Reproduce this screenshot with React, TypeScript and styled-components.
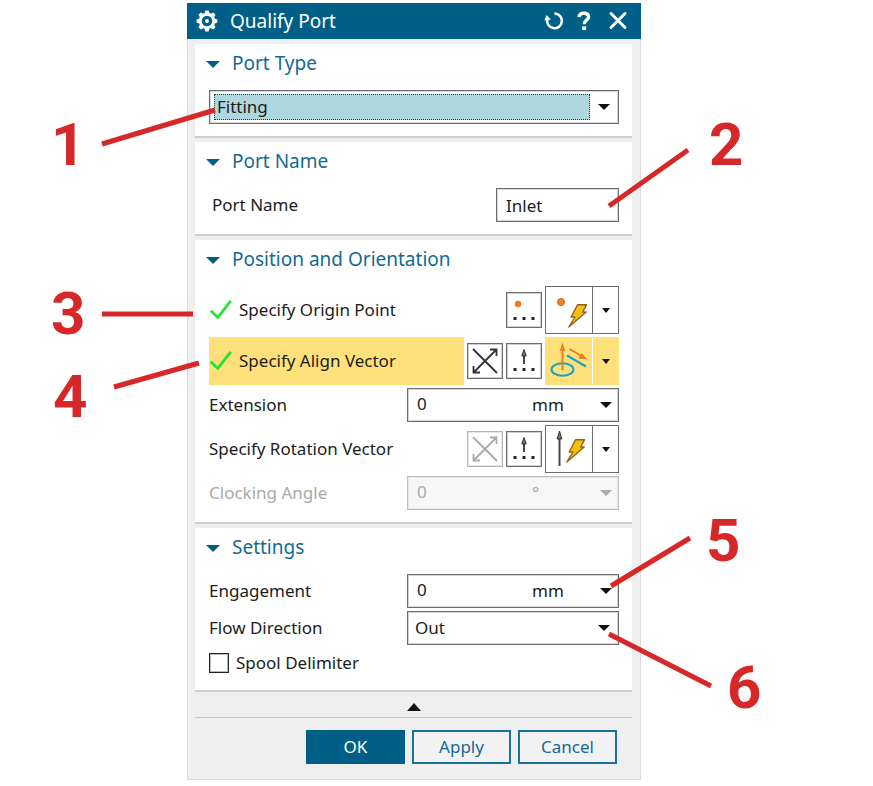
import React, { useState } from "react";
import styled, { createGlobalStyle, css } from "styled-components";

const brand = "#005f87";
const ink = "#1c1c1c";
const line = "#6e6e6e";
const yellow = "#ffe07a";
const red = "#d62828";

const GlobalStyle = createGlobalStyle`
  *, *::before, *::after { box-sizing: border-box; }
  body { margin: 0; background: #fff; }
  body, button, input, select {
    font-family: "Noto Sans", "Open Sans", sans-serif;
    font-size: 17px;
    line-height: 24px;
    color: ${ink};
  }
`;

const Page = styled.main`
  display: grid;
  grid-template-columns: 187fr minmax(440px, 454fr) 232fr;
  min-height: 100vh;
  align-items: start;
  overflow: hidden;
`;

const Figure = styled.div`
  grid-column: 2;
  position: relative;
  padding: 3px 0 6px;
`;

const Dialog = styled.section`
  background: #efefef;
  border: solid #dcdcdc;
  border-width: 0 1px 1px;
`;

const TitleBar = styled.header`
  display: flex;
  align-items: center;
  height: 36px;
  margin: 0 -1px;
  padding: 0 11px 0 9px;
  background: ${brand};
  color: #fff;
`;

const Title = styled.h1`
  flex: 1;
  margin: 0 0 0 12px;
  font-size: 19px;
  line-height: 36px;
  font-weight: 400;
`;

const TitleActions = styled.div`
  display: flex;
  gap: 8px;
`;

const TitleButton = styled.button`
  display: grid;
  place-items: center;
  width: 24px;
  height: 24px;
  padding: 0;
  border: 0;
  background: none;
  color: inherit;
`;

const Sections = styled.div`
  display: grid;
  gap: 4px;
  padding: 5px 8px 0 7px;
`;

const Panel = styled.section`
  padding: 0 13px 12px 14px;
  background: #fff;
  border-bottom: 2px solid #cfcfcf;
`;

const PanelHeading = styled.h2`
  margin: 0 0 8px -3px;
  font-size: 19px;
  line-height: 38px;
  font-weight: 400;
`;

const PanelToggle = styled.button`
  display: flex;
  align-items: center;
  gap: 12px;
  height: 38px;
  padding: 0;
  border: 0;
  background: none;
  font-size: inherit;
  color: #126a94;

  svg {
    margin-top: 2px;
  }
`;

const Rows = styled.div`
  display: grid;
  gap: 3px;
`;

const FieldRow = styled.div<{ $indent?: boolean; $muted?: boolean }>`
  display: grid;
  grid-template-columns: 198fr 212fr;
  align-items: center;
  padding-left: ${(p) => (p.$indent ? "3px" : "0")};
  color: ${(p) => (p.$muted ? "#a9a9a9" : ink)};
`;

const TextInput = styled.input`
  justify-self: end;
  width: 123px;
  height: 34px;
  padding: 0 9px;
  border: 1px solid ${line};
  box-shadow: inset 0 0 0 1px #d4d4d4;
  background: #fff;
`;

const Box = styled.div<{ $muted?: boolean }>`
  display: grid;
  align-items: center;
  height: 34px;
  border: 1px solid ${(p) => (p.$muted ? "#bdbdbd" : line)};
  background: ${(p) => (p.$muted ? "#f6f6f6" : "#fff")};
  box-shadow: inset 0 0 0 1px ${(p) => (p.$muted ? "#e6e6e6" : "#d4d4d4")};
  color: ${(p) => (p.$muted ? "#a9a9a9" : ink)};
`;

const ComboBox = styled(Box)`
  grid-template-columns: 1fr 28px;
`;

const UnitBox = styled(Box)`
  grid-template-columns: 1fr 61px 25px;
`;

const bare = css`
  appearance: none;
  min-width: 0;
  width: 100%;
  height: 32px;
  margin: 0;
  border: 0;
  border-radius: 0;
  background: none;
  color: inherit;
  opacity: 1;
`;

const BareSelect = styled.select<{ $pad?: number }>`
  ${bare}
  grid-row: 1;
  grid-column: 1 / -1;
  padding: 0 0 0 ${(p) => p.$pad ?? 7}px;
`;

const UnitSelect = styled(BareSelect)`
  grid-column: 2 / -1;
`;

const FocusedSelect = styled.select`
  ${bare}
  grid-row: 1;
  grid-column: 1;
  width: auto;
  height: 26px;
  margin-left: 4px;
  padding: 0 2px;
  border: 1px dotted #3e3232;
  line-height: 22px;
  background: #aed7e0;
`;

const ValueInput = styled.input`
  ${bare}
  grid-row: 1;
  grid-column: 1;
  padding: 0 0 3px 9px;
`;

const ArrowCell = styled.span`
  grid-row: 1;
  grid-column: -2;
  display: grid;
  place-items: center;
  pointer-events: none;
`;

const PickRow = styled.div`
  display: flex;
  align-items: center;
  gap: 3px;
  height: 48px;
`;

const PickLabel = styled.div<{ $active?: boolean }>`
  flex: 1;
  display: flex;
  align-items: center;
  gap: 7px;
  height: 48px;
  background: ${(p) => (p.$active ? yellow : "none")};
`;

const ToolButton = styled.button`
  display: grid;
  place-items: center;
  width: 36px;
  height: 36px;
  padding: 0;
  border: 1px solid ${line};
  box-shadow: inset 0 0 0 1px #cfcfcf;
  background: #fff;
  color: #333;
  &:disabled {
    border-color: #b5b5b5;
    box-shadow: inset 0 0 0 1px #e6e6e6;
    color: #aaa;
  }
`;

const Split = styled.div<{ $active?: boolean }>`
  display: grid;
  grid-template-columns: 46px 25px;
  gap: 1px;
  height: 48px;
  border: 1px solid ${(p) => (p.$active ? yellow : line)};
  background: ${(p) => (p.$active ? "#fff" : line)};
`;

const SplitButton = styled.button<{ $active?: boolean }>`
  display: grid;
  place-items: center;
  padding: 0;
  border: 0;
  background: ${(p) => (p.$active ? yellow : "#fff")};
`;

const CheckRow = styled.label`
  display: flex;
  align-items: center;
  gap: 7px;
  height: 30px;
`;

const CheckBox = styled.input`
  appearance: none;
  width: 20px;
  height: 20px;
  margin: 0;
  border: 1px solid #222;
  box-shadow: inset 0 0 0 1px #bbb;
  background: #fff;
  &:checked {
    background: ${brand};
  }
`;

const Collapse = styled.button`
  display: grid;
  place-items: center;
  height: 26px;
  margin: -4px 0 0;
  padding: 4px 0 0;
  border: 0;
  border-bottom: 1px solid #c6c6c6;
  background: none;
`;

const Footer = styled.footer`
  display: flex;
  justify-content: flex-end;
  gap: 7px;
  padding: 12px 23px 15px;
`;

const ActionButton = styled.button<{ $primary?: boolean }>`
  width: 99px;
  height: 34px;
  padding: 0;
  border: 2px solid ${(p) => (p.$primary ? brand : "#1b7299")};
  background: ${(p) => (p.$primary ? brand : "#f2f2f2")};
  color: ${(p) => (p.$primary ? "#fff" : "#126a94")};
`;

const CalloutLayer = styled.div<{ $side: "left" | "right" }>`
  position: absolute;
  top: 0;
  ${(p) => (p.$side === "left" ? "left: -187px;" : "left: calc(100% - 41px);")}
  width: 273px;
  height: 786px;
  pointer-events: none;
`;

const CalloutNumber = styled.span<{ $x: number; $y: number }>`
  position: absolute;
  left: ${(p) => p.$x}px;
  top: ${(p) => p.$y}px;
  font-family: Roboto, sans-serif;
  font-weight: 700;
  font-size: 60px;
  line-height: 44px;
  color: ${red};
`;

type Callout = { n: number; x: number; y: number; from: [number, number]; to: [number, number] };

const leftCallouts: Callout[] = [
  { n: 1, x: 51, y: 123, from: [102, 144], to: [215, 110] },
  { n: 3, x: 51, y: 292, from: [102, 314], to: [193, 314] },
  { n: 4, x: 53, y: 375, from: [114, 387], to: [199, 363] },
];

const rightCallouts: Callout[] = [
  { n: 2, x: 109, y: 123, from: [9, 206], to: [88, 150] },
  { n: 5, x: 106, y: 519, from: [11, 586], to: [90, 538] },
  { n: 6, x: 127, y: 666, from: [9, 634], to: [111, 686] },
];

function Callouts({ side, items }: { side: "left" | "right"; items: Callout[] }) {
  return (
    <CalloutLayer $side={side}>
      <svg width="273" height="786" stroke={red} strokeWidth="5" aria-hidden="true">
        {items.map((c) => (
          <line key={c.n} x1={c.from[0]} y1={c.from[1]} x2={c.to[0]} y2={c.to[1]} />
        ))}
      </svg>
      {items.map((c) => (
        <CalloutNumber key={c.n} $x={c.x} $y={c.y}>
          {c.n}
        </CalloutNumber>
      ))}
    </CalloutLayer>
  );
}

const Arrow = ({ w = 12, h = 6, up = false, color = "#111" }) => (
  <svg width={w} height={h} viewBox="0 0 12 6" preserveAspectRatio="none" fill={color} aria-hidden="true">
    <path d={up ? "M0 6 6 0l6 6z" : "M0 0h12L6 6z"} />
  </svg>
);

const Gear = () => (
  <svg width="22" height="22" viewBox="-11 -11 22 22" fill="none" stroke="#fff" aria-hidden="true">
    <circle r="6.800" strokeWidth="3" />
    <circle r="1.900" fill="#fff" stroke="none" />
    {[0, 45, 90, 135, 180, 225, 270, 315].map((a) => (
      <path key={a} d="M-2.500-7.500-1.600-10.400H1.600L2.500-7.500z" fill="#fff" stroke="none" transform={`rotate(${a})`} />
    ))}
  </svg>
);

const Reset = () => (
  <svg width="22" height="22" viewBox="0 0 22 22" fill="none" stroke="#fff" strokeWidth="2.500" aria-hidden="true">
    <path d="M11.500 3.400A7.400 7.400 0 1 1 4.300 9" />
    <path d="M1.400 10.600 3.400 5 8 9.400z" fill="#fff" stroke="none" />
  </svg>
);

const Help = () => (
  <svg width="22" height="22" viewBox="0 0 22 22" fill="none" stroke="#fff" aria-hidden="true">
    <path d="M4 7.200C4.200 4.200 6 3.200 8.800 3.200c3 0 4.800 1.400 4.800 3.800 0 3.400-4.400 3-4.400 7.200" strokeWidth="3.400" />
    <path d="M7.200 16.400h4v3.600h-4z" fill="#fff" stroke="none" />
  </svg>
);

const Close = () => (
  <svg width="22" height="22" viewBox="0 0 22 22" stroke="#fff" strokeWidth="3" strokeLinecap="round" aria-hidden="true">
    <path d="M4 3.500l14 14M18 3.500 4 17.500" />
  </svg>
);

const Tick = () => (
  <svg width="23" height="22" viewBox="0 0 23 22" fill="none" stroke="#2be234" strokeWidth="2.900" aria-hidden="true">
    <path d="M1.800 11.800 8.800 18.400 21.800 1.800" />
  </svg>
);

const Reverse = () => (
  <svg width="28" height="28" viewBox="0 0 28 28" fill="none" stroke="currentColor" strokeWidth="1.800" aria-hidden="true">
    <path d="M2 2l24 24M2.500 25.500 25.500 2.500M19 2.500h6.500V9M2.500 19v6.500H9" />
  </svg>
);

const Dots = ({ y }: { y: number }) => (
  <path d={`M5.500 ${y}h3v3h-3zM14.500 ${y}h3v3h-3zM23.500 ${y}h3v3h-3z`} fill="#222" />
);

const PointDialog = () => (
  <svg width="32" height="32" viewBox="0 0 32 32" aria-hidden="true">
    <circle cx="10" cy="10" r="3.200" fill="#ee7c1a" />
    <Dots y={23} />
  </svg>
);

const VectorDialog = () => (
  <svg width="32" height="32" viewBox="0 0 32 32" aria-hidden="true">
    <path d="M15 9.500v9.500h2V9.500z" fill="#444" />
    <path d="M16 4.500l2.200 6.500h-4.400z" fill="#777" stroke="#333" />
    <Dots y={23} />
  </svg>
);

const Bolt = ({ x, y }: { x: number; y: number }) => (
  <path
    transform={`translate(${x} ${y})`}
    d="M9.500 .8h9L14.600 8h3.600L.8 23 7 13H3.200z"
    fill="#f9bd0b"
    stroke="#8b6420"
    strokeWidth="1.400"
    strokeLinejoin="round"
  />
);

const InferredPoint = () => (
  <svg width="46" height="46" viewBox="0 0 46 46" aria-hidden="true">
    <circle cx="15" cy="15" r="3.500" fill="#f08124" stroke="#cf620c" />
    <Bolt x={22} y={17} />
  </svg>
);

const InferredVector = () => (
  <svg width="46" height="46" viewBox="0 0 46 46" aria-hidden="true">
    <path d="M13.500 40V10" stroke="#444" strokeWidth="2" />
    <path d="M13.500 5l2.400 8h-4.800z" fill="#777" stroke="#333" />
    <Bolt x={20} y={13} />
  </svg>
);

const AlignVector = () => (
  <svg width="46" height="46" viewBox="0 0 46 46" fill="none" aria-hidden="true">
    <ellipse cx="16.500" cy="31.500" rx="11" ry="6.200" stroke="#18a5c0" strokeWidth="2" />
    <path d="M16.500 32V10" stroke="#e8811c" strokeWidth="2" />
    <path d="M16.500 4.500l2.800 8.500h-5.600z" fill="#e8811c" />
    <path d="M23.500 11l12 7" stroke="#e8811c" strokeWidth="2" />
    <path d="M41.500 21.500l-9-1 3-5.400z" fill="#e8811c" />
    <path d="M21 17.500l19 11" stroke="#18a5c0" strokeWidth="2.200" />
  </svg>
);

function Section({ title, children }: { title: string; children: React.ReactNode }) {
  const [open, setOpen] = useState(true);
  return (
    <Panel>
      <PanelHeading>
        <PanelToggle aria-expanded={open} onClick={() => setOpen(!open)}>
          <Arrow w={14} h={7} color={brand} />
          {title}
        </PanelToggle>
      </PanelHeading>
      {open && <Rows>{children}</Rows>}
    </Panel>
  );
}

function UnitField({ id, label, unit, disabled }: { id: string; label: string; unit: string; disabled?: boolean }) {
  return (
    <FieldRow $muted={disabled}>
      <label htmlFor={id}>{label}</label>
      <UnitBox $muted={disabled}>
        <ValueInput id={id} defaultValue="0" disabled={disabled} />
        <UnitSelect $pad={0} aria-label={`${label} unit`} disabled={disabled}>
          <option>{unit}</option>
        </UnitSelect>
        <ArrowCell>
          <Arrow color={disabled ? "#aaa" : "#111"} />
        </ArrowCell>
      </UnitBox>
    </FieldRow>
  );
}

function SplitTool({ label, icon, active }: { label: string; icon: React.ReactNode; active?: boolean }) {
  return (
    <Split $active={active}>
      <SplitButton $active={active} aria-label={label}>
        {icon}
      </SplitButton>
      <SplitButton $active={active} aria-label={`${label} options`}>
        <Arrow w={8} h={5} />
      </SplitButton>
    </Split>
  );
}

export default function App() {
  return (
    <Page>
      <GlobalStyle />
      <Figure>
        <Dialog aria-label="Qualify Port">
          <TitleBar>
            <Gear />
            <Title>Qualify Port</Title>
            <TitleActions>
              <TitleButton aria-label="Reset">
                <Reset />
              </TitleButton>
              <TitleButton aria-label="Help">
                <Help />
              </TitleButton>
              <TitleButton aria-label="Close">
                <Close />
              </TitleButton>
            </TitleActions>
          </TitleBar>

          <Sections>
            <Section title="Port Type">
              <ComboBox>
                <FocusedSelect aria-label="Port Type">
                  <option>Fitting</option>
                </FocusedSelect>
                <ArrowCell>
                  <Arrow />
                </ArrowCell>
              </ComboBox>
            </Section>

            <Section title="Port Name">
              <FieldRow $indent>
                <label htmlFor="port-name">Port Name</label>
                <TextInput id="port-name" defaultValue="Inlet" />
              </FieldRow>
            </Section>

            <Section title="Position and Orientation">
              <PickRow>
                <PickLabel>
                  <Tick />
                  Specify Origin Point
                </PickLabel>
                <ToolButton aria-label="Point dialog">
                  <PointDialog />
                </ToolButton>
                <SplitTool label="Inferred point" icon={<InferredPoint />} />
              </PickRow>
              <PickRow>
                <PickLabel $active>
                  <Tick />
                  Specify Align Vector
                </PickLabel>
                <ToolButton aria-label="Reverse direction">
                  <Reverse />
                </ToolButton>
                <ToolButton aria-label="Vector dialog">
                  <VectorDialog />
                </ToolButton>
                <SplitTool label="Face or plane normal" icon={<AlignVector />} active />
              </PickRow>
              <UnitField id="extension" label="Extension" unit="mm" />
              <PickRow>
                <PickLabel>Specify Rotation Vector</PickLabel>
                <ToolButton aria-label="Reverse rotation direction" disabled>
                  <Reverse />
                </ToolButton>
                <ToolButton aria-label="Rotation vector dialog">
                  <VectorDialog />
                </ToolButton>
                <SplitTool label="Inferred vector" icon={<InferredVector />} />
              </PickRow>
              <UnitField id="clocking" label="Clocking Angle" unit="°" disabled />
            </Section>

            <Section title="Settings">
              <UnitField id="engagement" label="Engagement" unit="mm" />
              <FieldRow>
                <label htmlFor="flow">Flow Direction</label>
                <ComboBox>
                  <BareSelect id="flow">
                    <option>Out</option>
                    <option>In</option>
                  </BareSelect>
                  <ArrowCell>
                    <Arrow />
                  </ArrowCell>
                </ComboBox>
              </FieldRow>
              <CheckRow>
                <CheckBox type="checkbox" />
                Spool Delimiter
              </CheckRow>
            </Section>

            <Collapse aria-label="Show less">
              <Arrow w={14} h={8} up />
            </Collapse>
          </Sections>

          <Footer>
            <ActionButton $primary>OK</ActionButton>
            <ActionButton>Apply</ActionButton>
            <ActionButton>Cancel</ActionButton>
          </Footer>
        </Dialog>
        <Callouts side="left" items={leftCallouts} />
        <Callouts side="right" items={rightCallouts} />
      </Figure>
    </Page>
  );
}
